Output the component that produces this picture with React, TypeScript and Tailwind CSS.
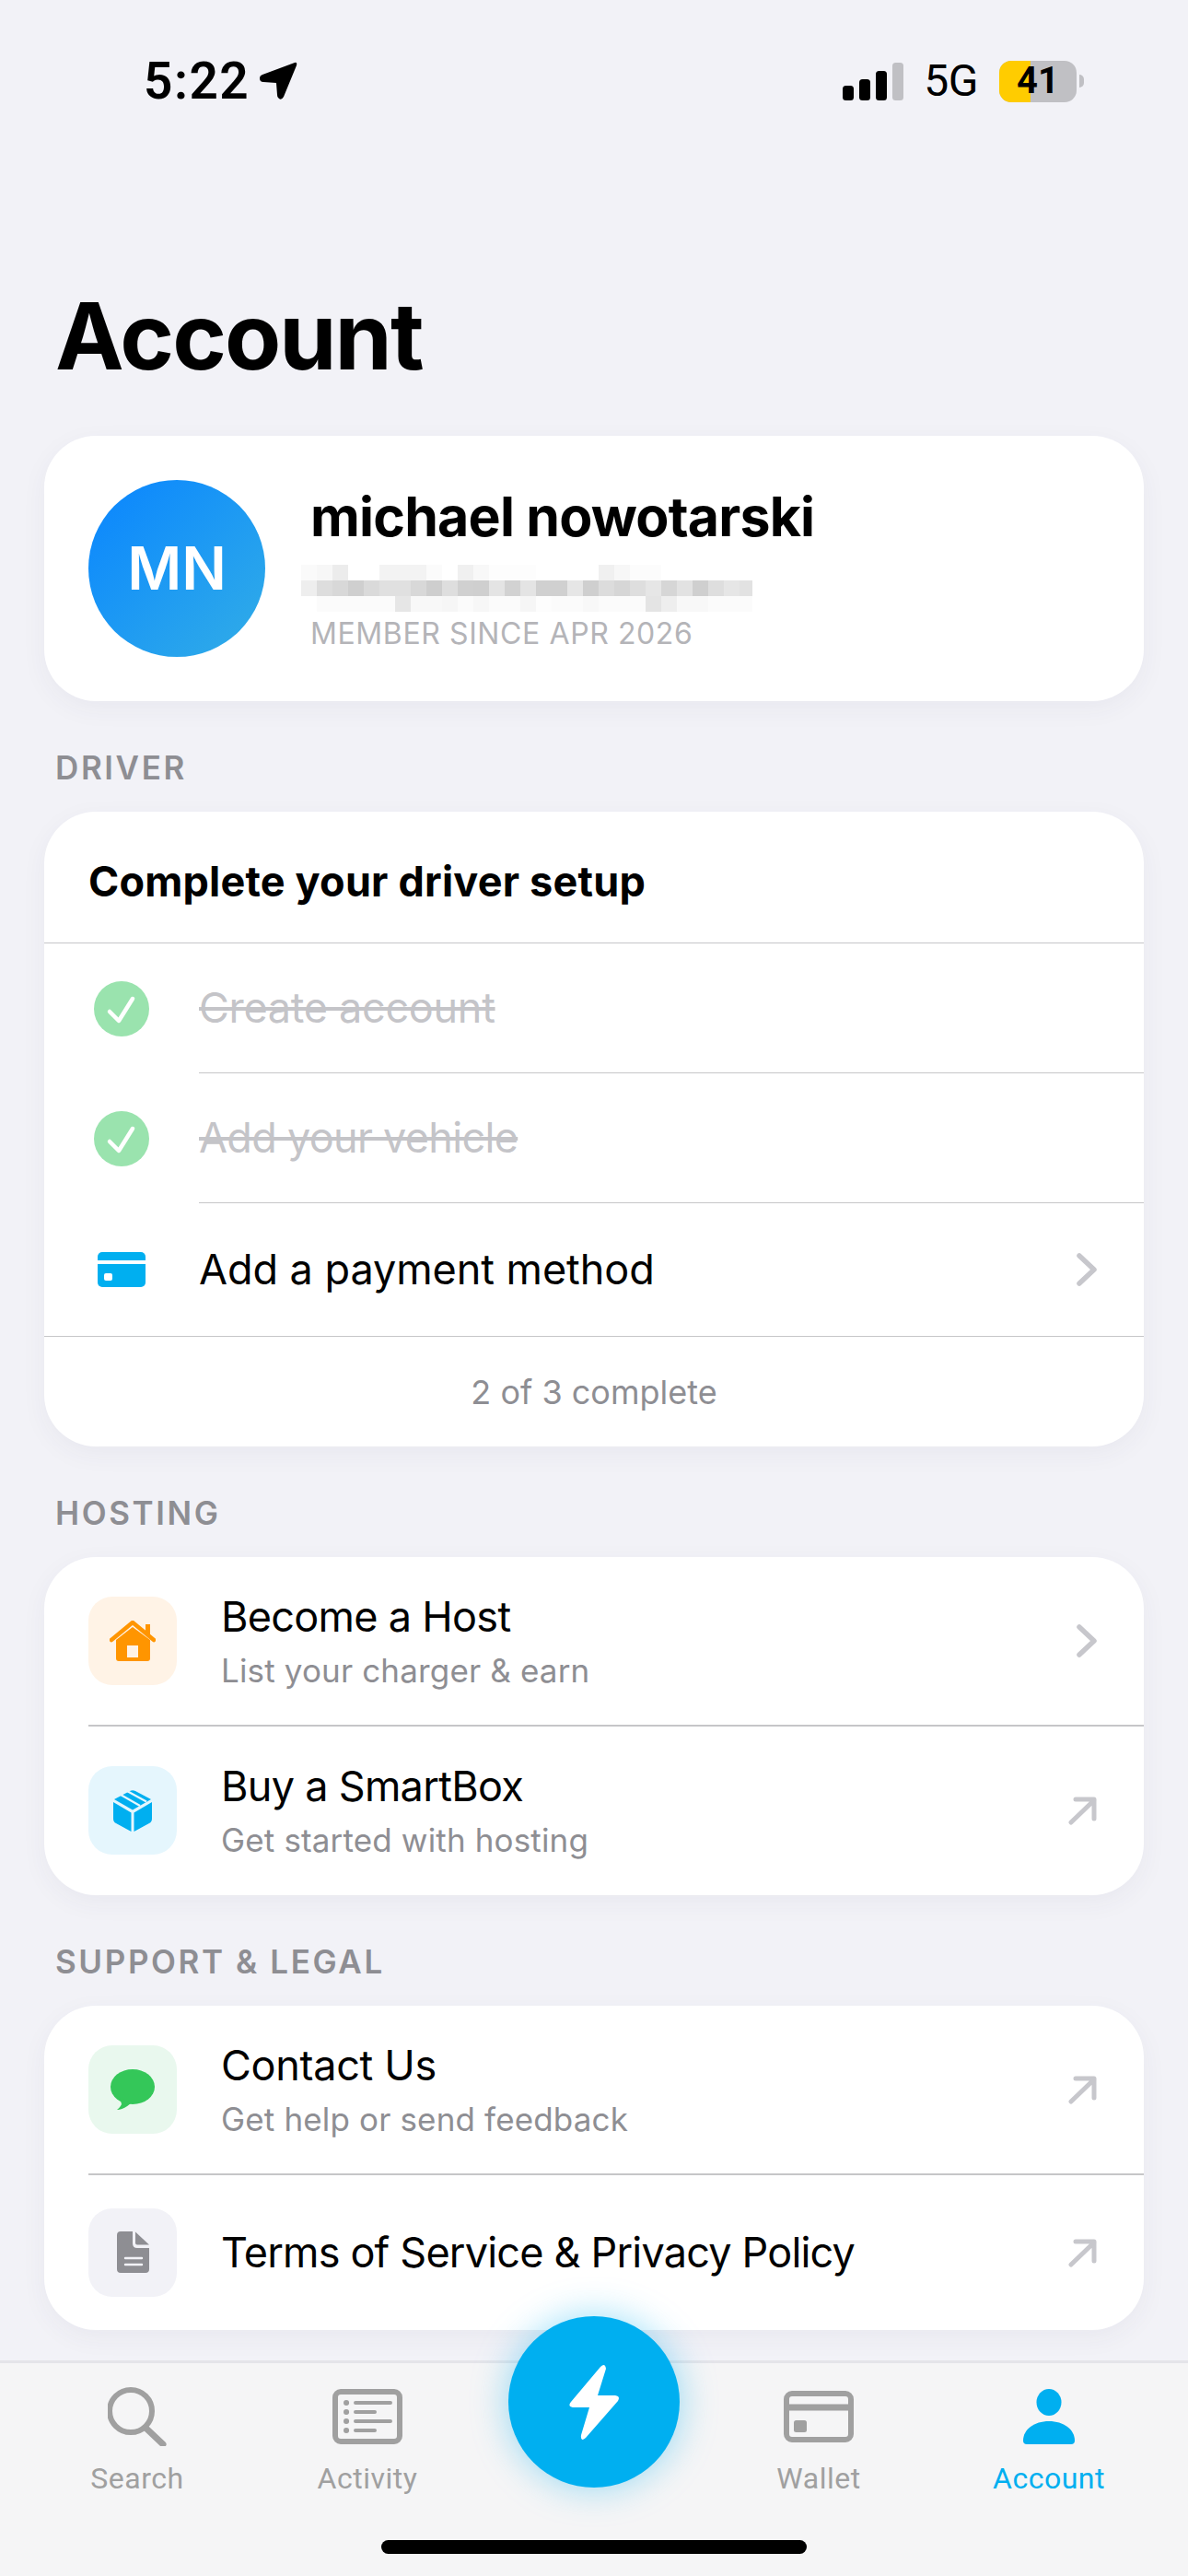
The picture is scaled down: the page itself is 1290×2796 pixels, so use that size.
const font = { fontFamily: "Inter, sans-serif" };

const blurRows = [
  [0xfa, 0xf7, 0xec, 0xff, 0xff, 0xf3, 0xf3, 0xf3, 0xfb, 0xff, 0xf0, 0xf8, 0xfd, 0xfd, 0xfd, 0xff, 0xff, 0xff, 0xff, 0xf0, 0xf7, 0xfc, 0xfc, 0xff, 0xff, 0xff, 0xff, 0xff, 0xff],
  [0xee, 0xdd, 0xd8, 0xcf, 0xda, 0xe0, 0xe0, 0xd8, 0xce, 0xde, 0xd0, 0xcf, 0xe4, 0xd2, 0xe4, 0xd0, 0xd0, 0xe6, 0xcf, 0xdc, 0xd6, 0xde, 0xe6, 0xd6, 0xe2, 0xcf, 0xde, 0xe6, 0xe2],
  [0xff, 0xfb, 0xfb, 0xfb, 0xfb, 0xfb, 0xe6, 0xf8, 0xf8, 0xf6, 0xfb, 0xf7, 0xfb, 0xfb, 0xf6, 0xfd, 0xfb, 0xfb, 0xf8, 0xfb, 0xfb, 0xfb, 0xe4, 0xee, 0xf8, 0xf8, 0xfb, 0xfb, 0xfb],
];

const BlurredEmail = () => (
  <svg width="490" height="51" viewBox="0 0 490 51" shapeRendering="crispEdges" className="ml-[-10px] block">
    {blurRows.map((row, y) =>
      row.map((v, x) => <rect key={`${x}-${y}`} x={x * 17} y={y * 17} width="17" height="17" fill={`rgb(${v},${v},${v})`} />)
    )}
  </svg>
);

const Chevron = () => (
  <svg width="24" height="38" viewBox="0 0 24 38" fill="none" className="shrink-0">
    <path d="M4 4 L20 19 L4 34" stroke="#c7c7cc" strokeWidth="5.5" strokeLinecap="round" strokeLinejoin="round" />
  </svg>
);

const Arrow = () => (
  <svg width="32" height="32" viewBox="0 0 32 32" fill="none" className="shrink-0">
    <path d="M3 29 L28 5 M8 4 H28 V25" stroke="#c7c7cc" strokeWidth="5" strokeLinecap="round" strokeLinejoin="round" />
  </svg>
);

const Check = () => (
  <div className="w-[60px] h-[60px] rounded-full bg-[#9ae3ae] shrink-0">
    <svg width="60" height="60" viewBox="0 0 60 60" fill="none">
      <path d="M17 33 L27 43 L42 19" stroke="#fff" strokeWidth="4.5" strokeLinecap="round" strokeLinejoin="round" />
    </svg>
  </div>
);

const HouseIcon = () => (
  <svg width="50" height="44" viewBox="0 0 50 44">
    <path d="M39 4 H44 V16 H39 Z" fill="#ff9500" />
    <path d="M7 21 L25 7 L44 21 V41 Q44 44 41 44 H10 Q7 44 7 41 Z" fill="#ff9500" />
    <path d="M2 21 L25 2 L48 21" fill="none" stroke="#ff9500" strokeWidth="4.5" strokeLinecap="round" strokeLinejoin="round" />
    <rect x="19" y="27" width="12" height="13" fill="#fff3e6" />
  </svg>
);

const BoxIcon = () => (
  <svg width="42" height="45" viewBox="0 0 42 45">
    <path d="M0 13 L19.5 24.5 V45 L3 36 Q0 34.5 0 31 Z" fill="#00aff0" />
    <path d="M42 13 L22.5 24.5 V45 L39 36 Q42 34.5 42 31 Z" fill="#00aff0" />
    <path d="M1 10 L18 1 Q21 -0.5 24 1 L41 10 L21 21.5 Z" fill="#00aff0" />
    <path d="M8 5 L29 17 M15 1 L36 12.5" stroke="#e5f6fd" strokeWidth="2.2" />
  </svg>
);

const ChatIcon = () => (
  <svg width="48" height="44" viewBox="0 0 48 44">
    <ellipse cx="24" cy="19" rx="24" ry="19" fill="#34c759" />
    <path d="M10 30 L12 38 Q10 42 7 44 Q14 44 22 37 Z" fill="#34c759" />
  </svg>
);

const DocIcon = () => (
  <svg width="35" height="45" viewBox="0 0 35 45">
    <path d="M4 0 H17 V13 Q17 18 22 18 H35 V41 Q35 45 31 45 H4 Q0 45 0 41 V4 Q0 0 4 0 Z" fill="#8e8e93" />
    <path d="M20 0.5 L35 14.5 H22 Q20 14.5 20 12.5 Z" fill="#8e8e93" />
    <path d="M9 29 H27 M9 36 H27" stroke="#f2f2f7" strokeWidth="2.4" strokeLinecap="round" />
  </svg>
);

const Label = ({ text }: { text: string }) => (
  <div className="ml-[12px] mt-[52px] mb-[28px] h-[40px] leading-[40px] text-[35px] font-semibold tracking-[2.6px] text-[#8e8e93]">
    {text}
  </div>
);

const Card = ({ children }: { children: React.ReactNode }) => (
  <div className="bg-white rounded-[56px] shadow-[0_8px_28px_rgba(60,60,90,0.05)] overflow-hidden">{children}</div>
);

const Row = ({
  icon,
  iconBg,
  title,
  titleClass,
  sub,
  trail,
  height,
}: {
  icon: React.ReactNode;
  iconBg: string;
  title: string;
  titleClass: string;
  sub?: string;
  trail: React.ReactNode;
  height: string;
}) => (
  <div className={`${height} flex items-center pl-[48px] pr-[50px]`}>
    <div className={`${iconBg} w-[96px] h-[96px] rounded-[26px] flex items-center justify-center shrink-0`}>{icon}</div>
    <div className="ml-[48px] flex-1">
      <div className={`text-[45px] leading-[56px] text-black ${titleClass}`}>{title}</div>
      {sub && <div className="text-[35px] leading-[46px] mt-[7px] tracking-[0.15px] text-[#8e8e93]">{sub}</div>}
    </div>
    {trail}
  </div>
);

const Tab = ({ icon, label, active }: { icon: React.ReactNode; label: string; active?: boolean }) => (
  <div className="w-[250px] flex flex-col items-center">
    <div className="h-[64px] flex items-center justify-center">{icon}</div>
    <div
      className={`mt-[16px] text-[32px] leading-[38px] tracking-[0.5px] ${active ? "text-[#00aff0]" : "text-[#a0a0a0]"}`}
      style={{ fontFamily: "Roboto, sans-serif" }}
    >
      {label}
    </div>
  </div>
);

export default function App() {
  return (
    <div className="relative w-[1290px] h-[2796px] bg-[#f2f2f7] overflow-hidden flex flex-col" style={font}>
      {/* status bar */}
      <div className="h-[305px] shrink-0 pt-[59px] pl-[156px] pr-[113px] flex justify-between items-start">
        <div className="flex items-center h-[58px]">
          <span className="text-[55px] font-semibold tracking-[1.5px] text-black" style={{ fontFamily: "Roboto, sans-serif" }}>
            5:22
          </span>
          <svg width="42" height="42" viewBox="0 0 42 42" className="ml-[10px]">
            <path d="M39 1 Q42 0 41 4 L27 38 Q24 43 21 39 Q20 38 20 36 L19 23 L5 22 Q1 22 1 18 Q1 15 4 14 Z" fill="#000" />
          </svg>
        </div>
        <div className="flex items-center h-[58px]">
          <svg width="66" height="41" viewBox="0 0 66 41">
            <rect x="0" y="25" width="12" height="16" rx="3.5" fill="#000" />
            <rect x="18" y="18" width="12" height="23" rx="3.5" fill="#000" />
            <rect x="36" y="9" width="12" height="32" rx="3.5" fill="#000" />
            <rect x="54" y="0" width="12" height="41" rx="3.5" fill="#c0c0c4" />
          </svg>
          <span className="ml-[22px] text-[48px] tracking-[-0.5px] text-black" style={{ fontFamily: "Roboto, sans-serif" }}>
            5G
          </span>
          <div className="relative ml-[23px] w-[84px] h-[45px] rounded-[13px] overflow-hidden bg-[#c0c0c4] flex items-center justify-center">
            <div className="absolute left-0 top-0 bottom-0 w-[34px] bg-[#ffcc00]" />
            <span className="relative text-[40px] font-bold text-black" style={{ fontFamily: "Roboto, sans-serif" }}>
              41
            </span>
          </div>
          <div className="ml-[3px] w-[5px] h-[14px] rounded-r-full bg-[#c0c0c4]" />
        </div>
      </div>

      {/* scroll content */}
      <div className="px-[48px] flex-1">
        <h1 className="ml-[12px] h-[120px] leading-[120px] mb-[48px] text-[100px] font-bold tracking-[-2px] text-black">Account</h1>

        <Card>
          <div className="h-[288px] flex items-center pl-[48px]">
            <div className="w-[192px] h-[192px] rounded-full bg-gradient-to-br from-[#0a84ff] to-[#32ade6] flex items-center justify-center shrink-0">
              <span className="text-white text-[64px] font-semibold">MN</span>
            </div>
            <div className="ml-[49px]">
              <div className="text-[59px] leading-[68px] font-bold text-black tracking-[-0.8px]">michael nowotarski</div>
              <div className="mt-[18px]">
                <BlurredEmail />
              </div>
              <div className="mt-[4px] text-[32px] leading-[40px] tracking-[0.6px] text-[#b4b4b8]">MEMBER SINCE APR 2026</div>
            </div>
          </div>
        </Card>

        <Label text="DRIVER" />
        <Card>
          <div className="h-[143px] flex items-center pl-[48px] pt-[10px] border-b-[1.5px] border-[#c6c6c8]">
            <span className="text-[45px] font-bold text-black tracking-[0.2px]">Complete your driver setup</span>
          </div>
          <div className="h-[141px] flex items-center pl-[54px]">
            <Check />
            <div className="ml-[54px] flex-1 h-full flex items-center border-b-[1.5px] border-[#c6c6c8]">
              <span className="text-[45px] line-through text-[#c4c4c8] tracking-[-0.3px]">Create account</span>
            </div>
          </div>
          <div className="h-[141px] flex items-center pl-[54px]">
            <Check />
            <div className="ml-[54px] flex-1 h-full flex items-center border-b-[1.5px] border-[#c6c6c8]">
              <span className="text-[45px] line-through text-[#c4c4c8] tracking-[-0.7px]">Add your vehicle</span>
            </div>
          </div>
          <div className="h-[145px] flex items-center pl-[58px] pr-[50px] border-b-[1.5px] border-[#c6c6c8]">
            <div className="relative w-[52px] h-[38px] rounded-[5px] bg-[#00aff0] shrink-0">
              <div className="absolute left-0 right-0 top-[9px] h-[4px] bg-white" />
              <div className="absolute left-[7px] top-[23px] w-[9px] h-[8px] rounded-[2px] bg-white" />
            </div>
            <span className="ml-[58px] flex-1 text-[45px] text-black tracking-[-0.05px]">Add a payment method</span>
            <Chevron />
          </div>
          <div className="h-[119px] flex items-center justify-center text-[36px] text-[#8e8e93]">2 of 3 complete</div>
        </Card>

        <Label text="HOSTING" />
        <Card>
          <Row height="h-[182px]" iconBg="bg-[#fff3e6]" icon={<HouseIcon />} title="Become a Host" titleClass="tracking-[-0.7px]" sub="List your charger & earn" trail={<Chevron />} />
          <div className="ml-[48px] h-[1.5px] bg-[#c6c6c8]" />
          <Row height="h-[183.5px]" iconBg="bg-[#e5f6fd]" icon={<BoxIcon />} title="Buy a SmartBox" titleClass="tracking-[-0.7px]" sub="Get started with hosting" trail={<Arrow />} />
        </Card>

        <Label text="SUPPORT & LEGAL" />
        <Card>
          <Row height="h-[182px]" iconBg="bg-[#e9f8ee]" icon={<ChatIcon />} title="Contact Us" titleClass="tracking-[-0.3px]" sub="Get help or send feedback" trail={<Arrow />} />
          <div className="ml-[48px] h-[1.5px] bg-[#c6c6c8]" />
          <Row height="h-[168px]" iconBg="bg-[#f2f2f7]" icon={<DocIcon />} title="Terms of Service & Privacy Policy" titleClass="tracking-[-0.8px]" trail={<Arrow />} />
        </Card>
      </div>

      {/* tab bar */}
      <div className="absolute left-0 right-0 bottom-0 h-[234px] bg-[#f5f5f6] border-t-[3px] border-[#e4e4e9] pt-[26px] pl-[24px] flex">
        <Tab
          label="Search"
          icon={
            <svg width="64" height="64" viewBox="0 0 64 64" fill="none" stroke="#a0a0a0">
              <circle cx="25" cy="26" r="23" strokeWidth="6" />
              <path d="M42 45 L60 62" strokeWidth="7" strokeLinecap="round" />
            </svg>
          }
        />
        <Tab
          label="Activity"
          icon={
            <svg width="76" height="60" viewBox="0 0 76 60" fill="none" stroke="#a0a0a0">
              <rect x="3" y="3" width="70" height="54" rx="6" strokeWidth="6" />
              <path d="M25 15 H63 M25 25 H46 M25 35 H63 M25 45 H46" strokeWidth="4" strokeLinecap="round" />
              <path d="M15 15 H15.1 M15 25 H15.1 M15 35 H15.1 M15 45 H15.1" strokeWidth="6" strokeLinecap="round" />
            </svg>
          }
        />
        <div className="w-[240px]" />
        <Tab
          label="Wallet"
          icon={
            <svg width="76" height="56" viewBox="0 0 76 56" fill="none" stroke="#a0a0a0">
              <rect x="3" y="3" width="70" height="50" rx="6" strokeWidth="6" />
              <path d="M3 18 H73" strokeWidth="7" />
              <rect x="11" y="32" width="14" height="13" rx="2.5" fill="#a0a0a0" stroke="none" />
            </svg>
          }
        />
        <Tab
          active
          label="Account"
          icon={
            <svg width="56" height="60" viewBox="0 0 56 60" fill="#00aff0">
              <ellipse cx="28" cy="14.5" rx="13.5" ry="14.5" />
              <path d="M0 56 C0 44 12 35 28 35 C44 35 56 44 56 56 Q56 60 52 60 H4 Q0 60 0 56 Z" />
            </svg>
          }
        />
      </div>

      {/* lightning button */}
      <div className="absolute left-[552px] top-[2514px] w-[186px] h-[186px] rounded-full bg-[#00aff0] shadow-[0_0_40px_rgba(0,175,240,0.4)] flex items-center justify-center">
        <svg width="54" height="83" viewBox="0 0 54 83" fill="#fff">
          <path d="M34 3 Q39 -2 40 5 L31 34 H50 Q56 35 53 40 L18 80 Q12 85 13 77 L22 47 H4 Q-2 46 2 41 Z" />
        </svg>
      </div>

      {/* home indicator */}
      <div className="absolute left-[414px] top-[2757px] w-[462px] h-[15px] rounded-full bg-black" />
    </div>
  );
}
